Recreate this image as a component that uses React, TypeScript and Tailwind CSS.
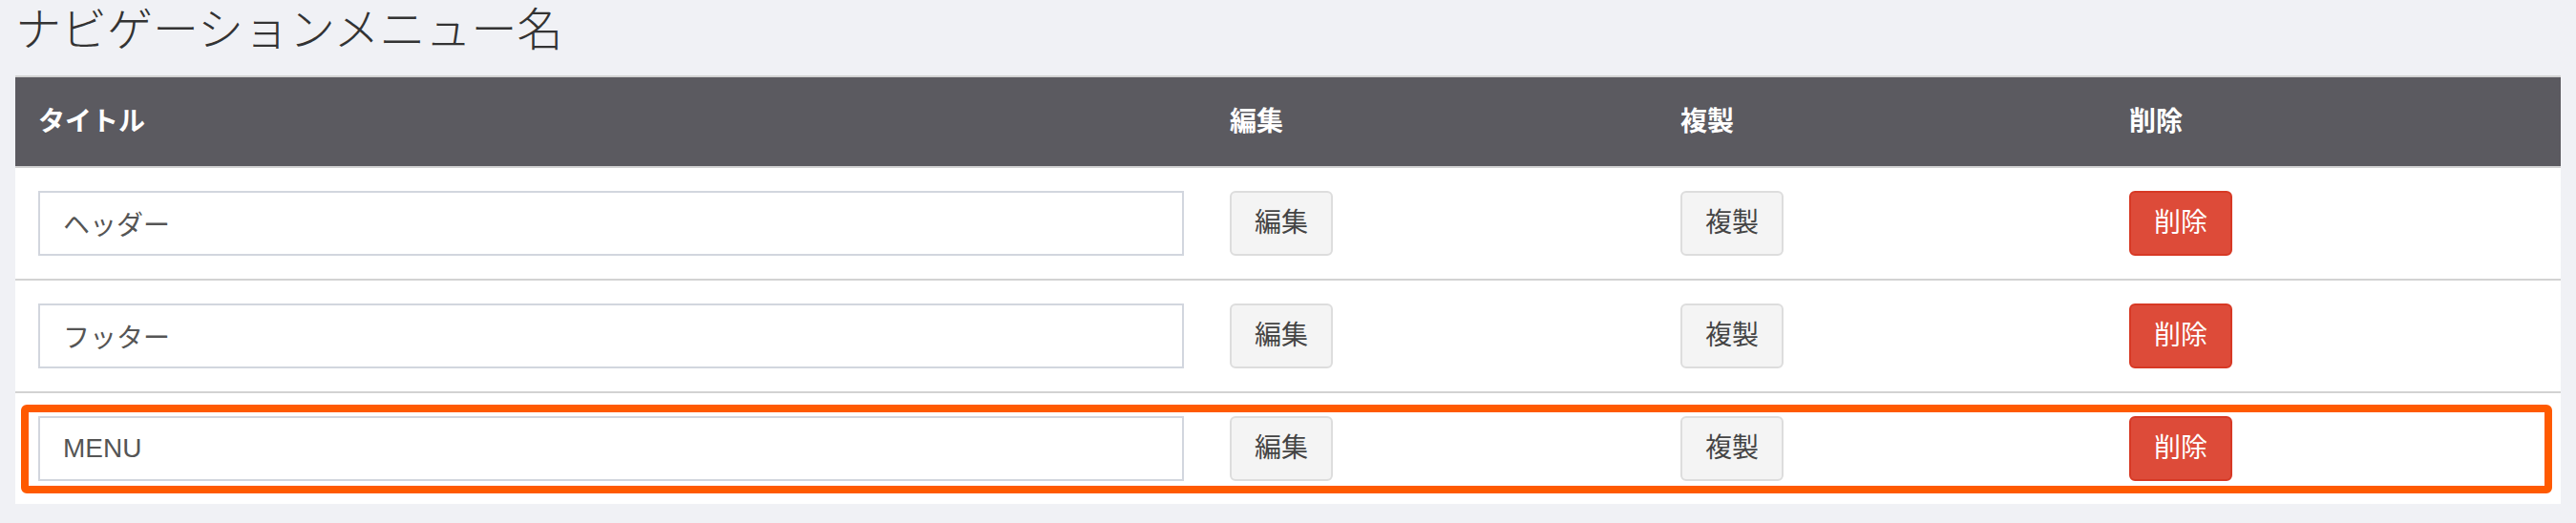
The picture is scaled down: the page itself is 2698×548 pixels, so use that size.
const rows = ['ヘッダー', 'フッター', 'MENU'];

const font = "font-['Liberation_Sans','Noto_Sans_CJK_JP',sans-serif]";

function Row({ title, highlight }: { title: string; highlight?: boolean }) {
  return (
    <div className="relative grid grid-cols-[1248px_472px_470px_1fr] items-center border-b-2 border-[#d2d2d2] py-6 last:border-b-0">
      <div className="px-6">
        <input
          readOnly
          value={title}
          className="block h-[68px] w-full border-2 border-[#d2d6de] bg-white px-6 text-[28px] text-[#555] outline-none"
        />
      </div>
      <div className="px-6">
        <button className="h-[68px] rounded-[6px] border-2 border-[#ddd] bg-[#f4f4f4] px-6 text-[28px] text-[#444]">
          編集
        </button>
      </div>
      <div className="px-6">
        <button className="h-[68px] rounded-[6px] border-2 border-[#ddd] bg-[#f4f4f4] px-6 text-[28px] text-[#444]">
          複製
        </button>
      </div>
      <div className="px-6">
        <button className="h-[68px] rounded-[6px] border-2 border-[#d73925] bg-[#dd4b39] px-6 text-[28px] text-white">
          削除
        </button>
      </div>
      {highlight && (
        <div className="pointer-events-none absolute top-[12px] right-[9px] bottom-[11px] left-[6px] rounded-[6px] border-[8px] border-[#ff5a00]" />
      )}
    </div>
  );
}

export default function App() {
  return (
    <div className={`min-h-screen bg-[#f0f1f5] px-4 pb-5 ${font}`}>
      <h1 className="h-[79px] pt-[2px] text-[48px] leading-[60px] font-light text-[#333]">
        ナビゲーションメニュー名
      </h1>
      <div className="border-t-2 border-[#d2d2d2] bg-white">
        <div className="grid h-[95px] grid-cols-[1248px_472px_470px_1fr] items-center border-b-2 border-[#d2d2d2] bg-[#5b5a60] text-[28px] font-bold text-white">
          <div className="px-6">タイトル</div>
          <div className="px-6">編集</div>
          <div className="px-6">複製</div>
          <div className="px-6">削除</div>
        </div>
        {rows.map((r, i) => (
          <Row key={r} title={r} highlight={i === rows.length - 1} />
        ))}
      </div>
    </div>
  );
}
